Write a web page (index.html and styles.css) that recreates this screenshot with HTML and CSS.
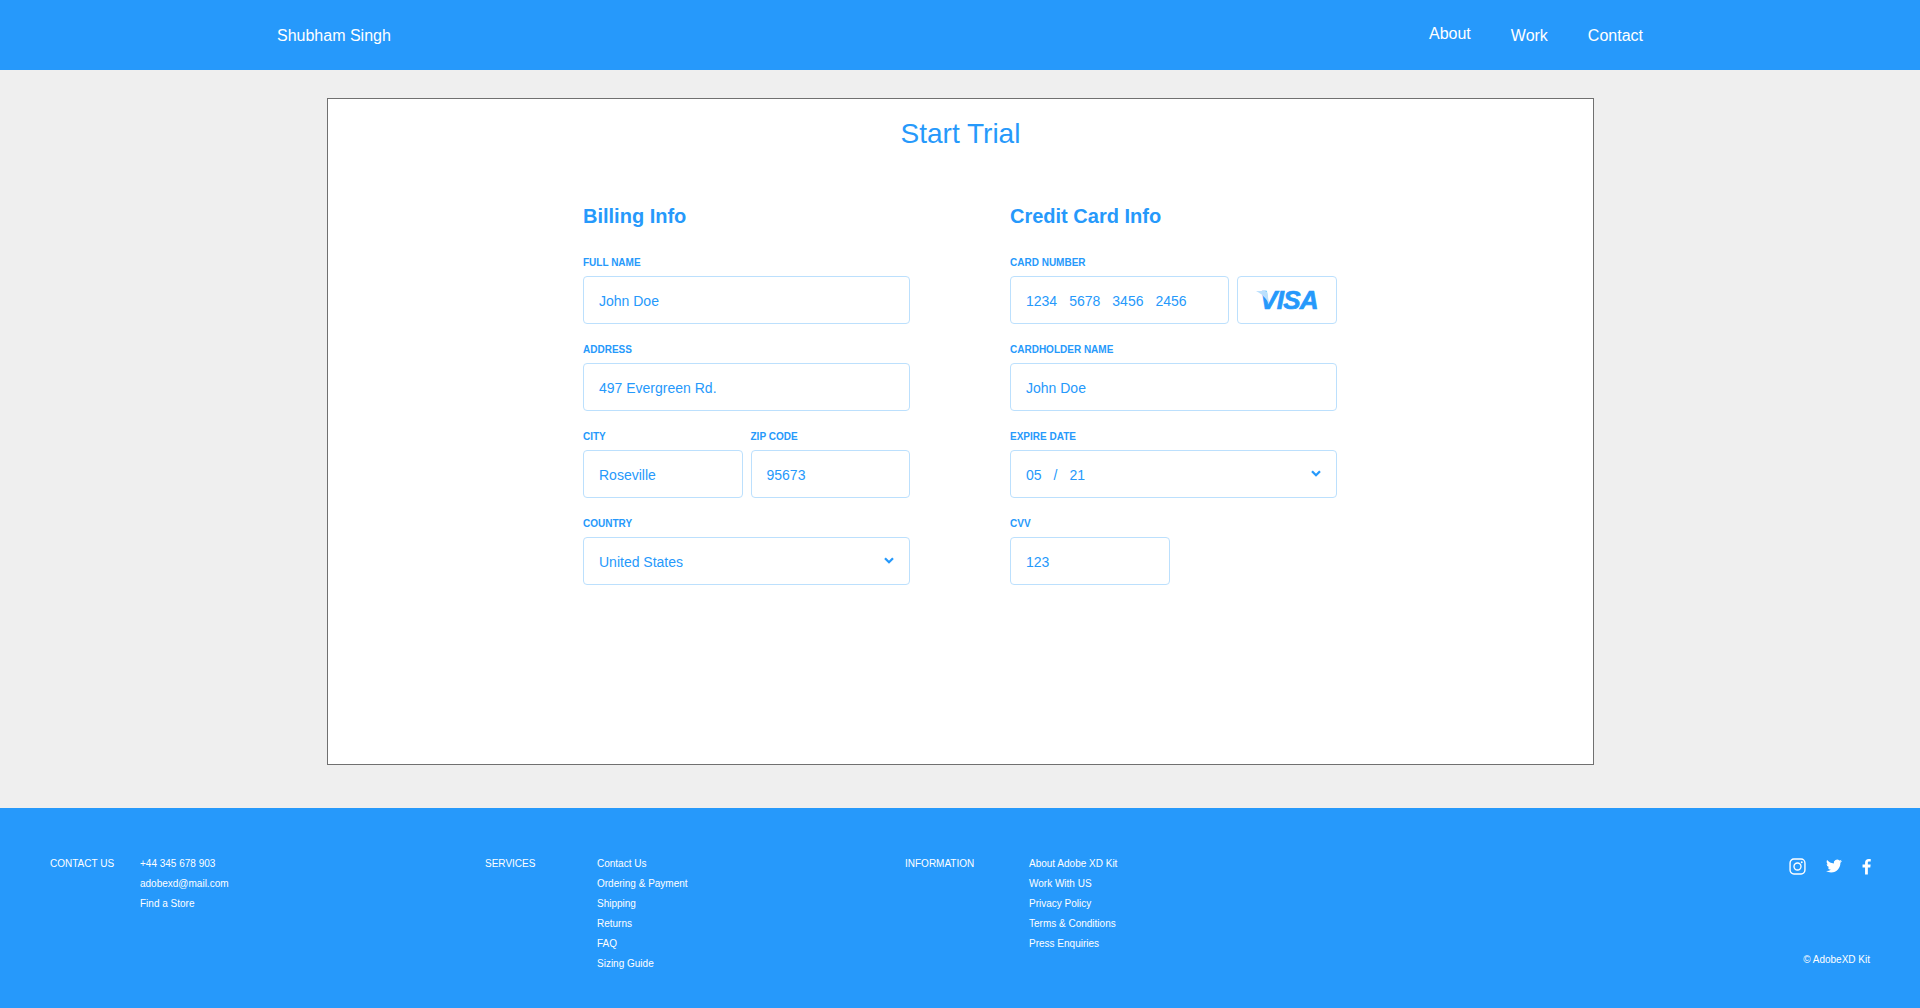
FILE: index.html
```html
<!DOCTYPE html>
<html lang="en">
<head>
    <meta charset="UTF-8">
    <title>Start Trial</title>
    <link rel="stylesheet" href="styles.css">
</head>
<body>
    <header class="topbar">
        <div class="brand">Shubham Singh</div>
        <nav class="nav">
            <a class="nav-about">About</a>
            <a>Work</a>
            <a>Contact</a>
        </nav>
    </header>

    <main class="page">
        <section class="card">
            <h1 class="title">Start Trial</h1>
            <div class="columns">
                <div class="col">
                    <h2 class="col-title">Billing Info</h2>
                    <div class="field">
                        <label>FULL NAME</label>
                        <div class="input">John Doe</div>
                    </div>
                    <div class="field">
                        <label>ADDRESS</label>
                        <div class="input">497 Evergreen Rd.</div>
                    </div>
                    <div class="split">
                        <div class="field">
                            <label>CITY</label>
                            <div class="input">Roseville</div>
                        </div>
                        <div class="field">
                            <label>ZIP CODE</label>
                            <div class="input">95673</div>
                        </div>
                    </div>
                    <div class="field">
                        <label>COUNTRY</label>
                        <div class="input select">
                            United States
                            <svg class="chevron" viewBox="0 0 10 7"><path d="M1 1.2l4 4 4-4" /></svg>
                        </div>
                    </div>
                </div>

                <div class="col">
                    <h2 class="col-title">Credit Card Info</h2>
                    <div class="field">
                        <label>CARD NUMBER</label>
                        <div class="card-row">
                            <div class="input card-number"><span>1234</span><span>5678</span><span>3456</span><span>2456</span></div>
                            <div class="visa-box">
                                <svg class="visa-swoosh" viewBox="0 0 16 16"><path d="M0 0h9c1.500 0 2.200.7 2.500 2L13 13C10 7 6 3 0 0z" /></svg>
                                <span class="visa">VISA</span>
                            </div>
                        </div>
                    </div>
                    <div class="field">
                        <label>CARDHOLDER NAME</label>
                        <div class="input">John Doe</div>
                    </div>
                    <div class="field">
                        <label>EXPIRE DATE</label>
                        <div class="input select">
                            <div class="expire"><span>05</span><span>/</span><span>21</span></div>
                            <svg class="chevron" viewBox="0 0 10 7"><path d="M1 1.2l4 4 4-4" /></svg>
                        </div>
                    </div>
                    <div class="field field-cvv">
                        <label>CVV</label>
                        <div class="input">123</div>
                    </div>
                </div>
            </div>
        </section>
    </main>

    <footer class="footer">
        <div class="foot-group foot-contact">
            <div class="foot-head">CONTACT US</div>
            <ul>
                <li>+44 345 678 903</li>
                <li>adobexd@mail.com</li>
                <li>Find a Store</li>
            </ul>
        </div>
        <div class="foot-group foot-services">
            <div class="foot-head">SERVICES</div>
            <ul>
                <li>Contact Us</li>
                <li>Ordering &amp; Payment</li>
                <li>Shipping</li>
                <li>Returns</li>
                <li>FAQ</li>
                <li>Sizing Guide</li>
            </ul>
        </div>
        <div class="foot-group foot-info">
            <div class="foot-head">INFORMATION</div>
            <ul>
                <li>About Adobe XD Kit</li>
                <li>Work With US</li>
                <li>Privacy Policy</li>
                <li>Terms &amp; Conditions</li>
                <li>Press Enquiries</li>
            </ul>
        </div>
        <div class="foot-side">
            <div class="socials">
                <svg class="ico-insta" viewBox="0 0 16 16"><rect x="1" y="1" width="14" height="14" rx="3.600" /><circle cx="8" cy="8" r="3.300" /><circle class="dot" cx="12" cy="4" r=".9" /></svg>
                <svg class="ico-solid ico-twitter" viewBox="0 0 24 24"><path d="M23.950 4.570a10 10 0 0 1-2.820.77 4.960 4.960 0 0 0 2.160-2.720c-.95.550-2 .96-3.130 1.190a4.920 4.920 0 0 0-8.380 4.480C7.690 8.090 4.070 6.130 1.640 3.160a4.820 4.820 0 0 0-.67 2.480c0 1.710.87 3.210 2.190 4.100a4.900 4.900 0 0 1-2.230-.62v.06a4.920 4.920 0 0 0 3.950 4.830 5 5 0 0 1-2.210.08 4.940 4.940 0 0 0 4.600 3.420A9.870 9.870 0 0 1 0 19.540a14 14 0 0 0 7.560 2.210c9.050 0 14-7.500 14-13.980 0-.21 0-.42-.02-.63a9.940 9.940 0 0 0 2.460-2.550z" /></svg>
                <svg class="ico-solid ico-fb" viewBox="0 0 10 18"><path d="M6.500 18V10h2.700l.4-3.100H6.500V5c0-.9.300-1.500 1.600-1.500h1.600V.7C9.400.700 8.500.6 7.400.6 5 .6 3.400 2 3.400 4.700v2.200H.6V10h2.800v8z" /></svg>
            </div>
            <div class="copyright">© AdobeXD Kit</div>
        </div>
    </footer>
</body>
</html>
```

FILE: styles.css
```css
html,
body {
    margin: 0;
    padding: 0;
}

body {
    height: 1008px;
    overflow: hidden;
    background: #efefef;
    font-family: "Liberation Sans", Arial, sans-serif;
    color: #2699fb;
}

.topbar {
    display: flex;
    align-items: center;
    justify-content: space-between;
    height: 70px;
    padding: 0 277px;
    background: #2699fb;
    color: #fff;
}

.brand {
    font-size: 16px;
    padding-top: 1px;
}

.nav {
    display: flex;
    align-items: center;
    gap: 40px;
    font-size: 16px;
    padding-top: 1px;
}

.nav-about {
    margin-bottom: 3px;
}

.page {
    height: 738px;
    padding-top: 28px;
    box-sizing: border-box;
}

.card {
    width: 1267px;
    height: 667px;
    margin-left: 327px;
    box-sizing: border-box;
    border: 1px solid #707070;
    background: #fff;
}

.title {
    margin: 0;
    padding-top: 18px;
    font-size: 28px;
    font-weight: normal;
    line-height: 34px;
    text-align: center;
}

.columns {
    display: flex;
    gap: 100px;
    padding: 53px 0 0 255px;
}

.col {
    width: 327px;
}

.col-title {
    margin: 0 0 28px;
    font-size: 20px;
    font-weight: bold;
    line-height: 24px;
}

.field {
    margin-bottom: 19px;
}

.field label {
    display: block;
    height: 14px;
    margin-bottom: 6px;
    font-size: 10px;
    font-weight: bold;
    line-height: 14px;
}

.input {
    display: flex;
    align-items: center;
    justify-content: space-between;
    height: 48px;
    padding: 1px 15px 0;
    box-sizing: border-box;
    border: 1px solid #bce0fd;
    border-radius: 4px;
    background: #fff;
    font-size: 14px;
}

.split {
    display: flex;
    gap: 8px;
}

.split .field {
    width: 160px;
}

.chevron {
    width: 10px;
    height: 7px;
    margin-top: -2px;
    fill: none;
    stroke: #2699fb;
    stroke-width: 2.300;
}

.card-row {
    display: flex;
    gap: 8px;
}

.card-number {
    justify-content: flex-start;
    gap: 12px;
    width: 219px;
}

.visa-box {
    display: flex;
    align-items: center;
    justify-content: center;
    width: 100px;
    height: 48px;
    box-sizing: border-box;
    border: 1px solid #bce0fd;
    border-radius: 4px;
}

.visa-swoosh {
    z-index: 1;
    width: 16px;
    height: 16px;
    margin: -2px -12px 0 0;
    fill: #bce0fd;
}

.visa {
    font-size: 26px;
    font-weight: bold;
    font-style: italic;
    letter-spacing: -.7px;
    line-height: 26px;
    -webkit-text-stroke: .7px #2699fb;
}

.expire {
    display: flex;
    gap: 12px;
}

.field-cvv {
    width: 160px;
}

.footer {
    height: 200px;
    box-sizing: border-box;
    padding: 49px 49px 0 50px;
    display: flex;
    background: #2699fb;
    color: #fff;
    font-size: 10px;
    line-height: 14px;
}

.foot-group {
    display: flex;
}

.foot-group ul {
    margin: 0;
    padding: 0;
    list-style-type: none;
}

.foot-group li {
    height: 14px;
    margin-bottom: 6px;
}

.foot-contact {
    width: 435px;
}

.foot-contact .foot-head {
    width: 90px;
}

.foot-services {
    width: 420px;
}

.foot-services .foot-head {
    width: 112px;
}

.foot-info .foot-head {
    width: 124px;
}

.foot-side {
    flex: 1;
    display: flex;
    flex-direction: column;
    align-items: flex-end;
}

.socials {
    display: flex;
    align-items: center;
    gap: 20px;
    height: 18px;
}

.socials svg {
    display: block;
}

.ico-insta {
    width: 17px;
    height: 17px;
    fill: none;
    stroke: #fff;
    stroke-width: 1.300;
}

.ico-insta .dot {
    fill: #fff;
    stroke: none;
}

.ico-solid {
    fill: #fff;
}

.ico-twitter {
    width: 16px;
    height: 16px;
}

.ico-fb {
    width: 9px;
    height: 17px;
}

.copyright {
    margin-top: 78px;
    margin-right: 1px;
    font-size: 10px;
}
```
